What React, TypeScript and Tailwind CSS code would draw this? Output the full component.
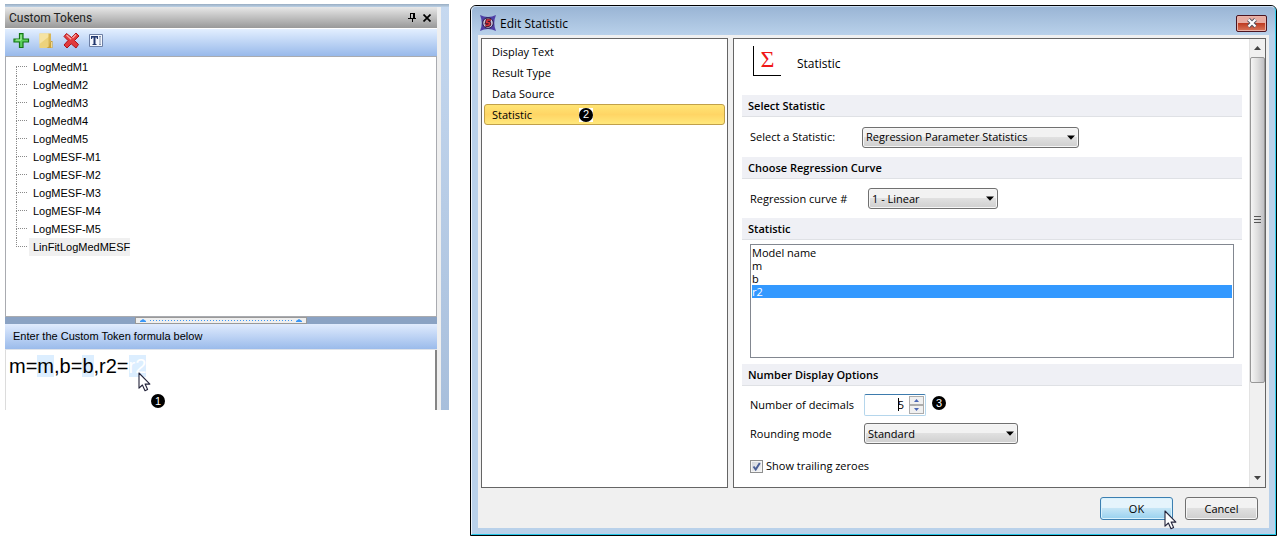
import React, { useState } from "react";

const tokens = [
  "LogMedM1",
  "LogMedM2",
  "LogMedM3",
  "LogMedM4",
  "LogMedM5",
  "LogMESF-M1",
  "LogMESF-M2",
  "LogMESF-M3",
  "LogMESF-M4",
  "LogMESF-M5",
  "LinFitLogMedMESF",
];

const pages = ["Display Text", "Result Type", "Data Source", "Statistic"];

const statistics = ["Model name", "m", "b", "r2"];

/** Black numbered callout */
const Callout: React.FC<{ n: number }> = ({ n }) => (
  <span className="flex size-[14px] shrink-0 items-center justify-center rounded-full bg-black font-['Liberation_Sans',sans-serif] text-[11px] leading-none text-white">
    {n}
  </span>
);

const Pointer: React.FC = () => (
  <svg width="13" height="20" viewBox="0 0 13 20">
    <path
      d="M1 1v15.2l3.4-3.2 2.6 5.8 2.6-1.2-2.5-5.5h4.8z"
      fill="#fff"
      stroke="#23233a"
      strokeWidth="1.1"
      strokeLinejoin="round"
    />
  </svg>
);

interface DropDownProps {
  id: string;
  options: string[];
  /** Tailwind width class */
  width: string;
}

const DropDown: React.FC<DropDownProps> = ({ id, options, width }) => (
  <div className={`relative ${width}`}>
    <select
      id={id}
      className="block h-[21px] w-full appearance-none rounded-[3px] border border-[#707070] bg-linear-to-b from-[#f2f2f2] from-45% via-[#e0e0e0] via-50% to-[#cfcfcf] pr-5 pl-[3px] text-[11px] leading-[18px] text-black inset-shadow-[0_0_0_1px_#f6f6f6]"
    >
      {options.map((option) => (
        <option key={option}>{option}</option>
      ))}
    </select>
    <svg
      className="pointer-events-none absolute top-2 right-1"
      width="8"
      height="5"
      viewBox="0 0 8 5"
    >
      <path d="M0 .5h8L4 4.7z" fill="#000" />
    </svg>
  </div>
);

const SectionTitle: React.FC<{ children: React.ReactNode }> = ({ children }) => (
  <h3 className="h-[22px] border-b border-[#dfe1e5] bg-[#eff0f5] pl-[6px] text-[11px] leading-[22px] font-semibold text-black">
    {children}
  </h3>
);

const TokenPanel: React.FC = () => {
  const [selected, setSelected] = useState("LinFitLogMedMESF");

  return (
    <section className="flex min-w-0 flex-col bg-linear-to-b from-[#c6d9f0] to-[#a8bfdc] pr-2 font-['Liberation_Sans',sans-serif] text-[11px] text-black">
      <div className="-mr-2 h-[3px] bg-linear-to-b from-[#98adc2] to-[#bdd1e6]" />
      <div className="flex flex-col bg-[#efefef] pr-1">
        {/* Title bar */}
        <header className="flex h-[21px] items-center bg-linear-to-b from-[#e8e8e8] to-[#999] pr-[6px] pl-1">
          <h2 className="flex-1 font-['Roboto',sans-serif] text-[12px] leading-5 text-[#222]">
            Custom Tokens
          </h2>
          <button type="button" aria-label="Pin" className="mr-[7px]">
            <svg width="8" height="9" viewBox="0 0 8 9" shapeRendering="crispEdges">
              <path d="M2 0h5v5h1v1H5v3H4V6H0V5h2zM3 1v4h2V1z" fill="#000" fillRule="evenodd" />
            </svg>
          </button>
          <button type="button" aria-label="Close">
            <svg width="8" height="8" viewBox="0 0 8 8">
              <path d="M.5.5l7 7M7.500.5l-7 7" stroke="#000" strokeWidth="1.7" />
            </svg>
          </button>
        </header>

        {/* Toolbar */}
        <div className="flex h-[29px] items-center gap-2 border-t border-b border-t-white border-b-[#a9abb0] bg-linear-to-b from-[#e3efff] to-[#98b9ea] pb-1 pl-2">
          <button type="button" aria-label="Add token">
            <svg width="17" height="17" viewBox="0 0 17 17">
              <path
                d="M6.500 1.500h3.500v5.500h5.500v3h-5.500v5.500H6.500V10H1V7h5.500z"
                fill="#5bd05b"
                stroke="#147514"
                strokeWidth="1.2"
              />
              <path d="M8 3v5H3" fill="none" stroke="#b5f2ae" />
            </svg>
          </button>
          <button type="button" aria-label="Open token">
            <svg width="17" height="17" viewBox="0 0 17 17">
              <path d="M1.500 1.500h9.500v14.500h-9.500z" fill="#ecd27c" />
              <path d="M1.500 1.500h9.500v3L1.500 12z" fill="#f5e3a3" />
              <path d="M10.500 1.500h2.500v7l-1 1.500v6h-1.500z" fill="#d9b654" />
              <path d="M12.500 9h2v7h-6l2.500-1.500 1-4z" fill="#caa23a" />
              <path d="M13.500 10v5.500" stroke="#f2da8e" />
            </svg>
          </button>
          <button type="button" aria-label="Delete token">
            <svg width="17" height="17" viewBox="0 0 17 17">
              <path
                d="M3.500 1.500l5 4 4.500-4.500 3 3-4.500 4.500 4 4-2.500 3.500-4.800-4.200L4 16l-3-3 4-4.500L1 4.500z"
                fill="#e13a3d"
                stroke="#b01217"
              />
              <path d="M3.500 3l4.700 4.200M13 2.500L9.500 6" stroke="#f9a5a3" strokeWidth="1.400" />
            </svg>
          </button>
          <button type="button" aria-label="Text token">
            <svg width="17" height="17" viewBox="0 0 17 17">
              <path d="M1.500 2.500h13v12h-13z" fill="#f4f7fd" stroke="#6c7fa5" />
              <path d="M3 4h7v3h-1l-.5-1.500H7.500V12h1v1h-4v-1h1V5.500h-1L4 7H3z" fill="#23396f" />
              <path d="M11 4.500h2M12 4.500v8M11 12.500h2" stroke="#8290ab" fill="none" />
            </svg>
          </button>
        </div>

        {/* Token tree */}
        <ul
          role="tree"
          aria-label="Custom tokens"
          className="min-h-[260px] border-x border-b border-[#a9abb0] bg-white pt-px pl-[10px]"
        >
          {tokens.map((token, i) => (
            <li key={token} role="treeitem" aria-selected={token === selected} className="flex h-[18px]">
              <span className="flex w-[11px] flex-col">
                <span
                  className={`h-[9px] border-b border-dotted border-[#8a8a8a] ${i > 0 ? "border-l" : ""}`}
                />
                {i < tokens.length - 1 && (
                  <span className="h-[9px] border-l border-dotted border-[#8a8a8a]" />
                )}
              </span>
              <button
                type="button"
                onClick={() => setSelected(token)}
                className={`ml-[2px] pl-1 leading-[18px] ${token === selected ? "bg-[#f0f0f0]" : ""}`}
              >
                {token}
              </button>
            </li>
          ))}
        </ul>

        {/* Splitter */}
        <div className="flex h-[7px] justify-center bg-[#8aa2c3]">
          <div className="flex w-2/5 items-center gap-1 border border-[#999] bg-[#efefef] px-1">
            <svg width="6" height="3" viewBox="0 0 6 3">
              <path d="M0 3V2l3-2 3 2v1z" fill="#3896f7" />
            </svg>
            <svg className="h-px min-w-0 flex-1">
              <line x1="0" y1="0.5" x2="100%" y2="0.5" stroke="#3896f7" strokeDasharray="1 2" />
            </svg>
            <svg width="6" height="3" viewBox="0 0 6 3">
              <path d="M0 3V2l3-2 3 2v1z" fill="#3896f7" />
            </svg>
          </div>
        </div>

        <h3
          id="formula-label"
          className="h-[26px] border-b border-[#dfe3ea] bg-linear-to-b from-[#e0ebfd] to-[#9bbbeb] pl-2 leading-6"
        >
          Enter the Custom Token formula below
        </h3>

        {/* Formula editor */}
        <div className="relative min-h-[60px] border-r-2 border-l border-r-[#858585] border-l-[#dcdcdc] bg-white pt-[5px] pl-[3px]">
          <div
            role="textbox"
            aria-labelledby="formula-label"
            contentEditable
            suppressContentEditableWarning
            className="text-[20px] leading-[23px] outline-none"
          >
            m=<span className="bg-[#dceeff]">m</span>,b=<span className="bg-[#dceeff]">b</span>,r2=
            <span className="bg-[#dceeff] text-white">r2</span>
          </div>
          <div className="pointer-events-none absolute top-[22px] left-[132px] flex items-end">
            <Pointer />
            <div className="-mb-4">
              <Callout n={1} />
            </div>
          </div>
        </div>
      </div>
    </section>
  );
};

const PageList: React.FC = () => {
  const [page, setPage] = useState("Statistic");

  return (
    <nav className="flex w-[247px] shrink-0 flex-col border border-[#656565] bg-white px-[2px] pt-[2px]">
      {pages.map((name) => (
        <button
          key={name}
          type="button"
          onClick={() => setPage(name)}
          className={`flex h-[21px] items-center rounded-[3px] border pl-[7px] text-left ${
            name === page
              ? "border-[#c1a04a] bg-linear-to-b from-[#ffe575] via-[#ffd565] to-[#ffe87c]"
              : "border-transparent"
          }`}
        >
          <span className="w-[87px]">{name}</span>
          {name === "Statistic" && (
            <span className="bg-white">
              <Callout n={2} />
            </span>
          )}
        </button>
      ))}
    </nav>
  );
};

const ScrollBar: React.FC = () => (
  <div className="flex w-4 shrink-0 flex-col items-center border-l border-[#e3e3e3] bg-[#f0f0f0]">
    <button type="button" aria-label="Scroll up" className="flex h-[18px] w-full items-center justify-center">
      <svg width="7" height="4" viewBox="0 0 7 4">
        <path d="M0 4l3.500-4L7 4z" fill="#444" />
      </svg>
    </button>
    <div className="flex w-full flex-1 flex-col">
      <div className="flex w-full flex-[79] flex-col items-center justify-center gap-[2px] rounded-xs border border-[#979797] bg-linear-to-r from-[#f5f5f5] via-[#dedede] to-[#c0c0c4]">
        <span className="h-px w-[7px] bg-[#555]" />
        <span className="h-px w-[7px] bg-[#555]" />
        <span className="h-px w-[7px] bg-[#555]" />
      </div>
      <div className="flex-[21]" />
    </div>
    <button type="button" aria-label="Scroll down" className="flex h-[18px] w-full items-center justify-center">
      <svg width="7" height="4" viewBox="0 0 7 4">
        <path d="M0 0h7L3.500 4z" fill="#444" />
      </svg>
    </button>
  </div>
);

const StatisticForm: React.FC = () => {
  const [statistic, setStatistic] = useState("r2");
  const [decimals, setDecimals] = useState(5);

  return (
    <div className="flex min-w-0 flex-1 border border-[#656565] bg-white">
      <div className="min-w-0 flex-1 pt-[7px] pr-[7px] pb-[13px] pl-2">
        <div className="mb-[19px] flex h-[30px] items-center pl-[11px]">
          <span className="flex h-[30px] w-7 justify-center border-b border-l border-black font-['Liberation_Serif',serif] text-[24px] leading-[27px] text-[#f01818]">
            Σ
          </span>
          <h2 className="ml-4 pt-[6px] text-[12px] leading-4">Statistic</h2>
        </div>

        <SectionTitle>Select Statistic</SectionTitle>
        <div className="flex h-10 items-center pl-2">
          <label htmlFor="statistic-kind" className="w-28">
            Select a Statistic:
          </label>
          <DropDown
            id="statistic-kind"
            width="w-[217px]"
            options={["Regression Parameter Statistics"]}
          />
        </div>

        <SectionTitle>Choose Regression Curve</SectionTitle>
        <div className="flex h-[39px] items-center pl-2">
          <label htmlFor="curve" className="w-[118px]">
            Regression curve #
          </label>
          <DropDown id="curve" width="w-[130px]" options={["1 - Linear"]} />
        </div>

        <SectionTitle>Statistic</SectionTitle>
        <ul
          role="listbox"
          aria-label="Statistic"
          className="mt-1 mr-2 mb-[6px] ml-2 min-h-[114px] border border-[#828790] p-px"
        >
          {statistics.map((name) => (
            <li
              key={name}
              role="option"
              aria-selected={name === statistic}
              onClick={() => setStatistic(name)}
              className={`h-[13px] leading-[13px] ${name === statistic ? "bg-[#3399ff] text-white" : ""}`}
            >
              {name}
            </li>
          ))}
        </ul>

        <SectionTitle>Number Display Options</SectionTitle>
        <div className="mt-2 flex flex-col gap-[7px] pl-2">
          <div className="flex items-center">
            <label htmlFor="decimals" className="w-[114px]">
              Number of decimals
            </label>
            <div className="relative flex h-[22px] w-[62px] items-center rounded-xs border border-[#b5d6ec] border-t-[#3d7bad] bg-white pr-px">
              <input
                id="decimals"
                type="text"
                inputMode="numeric"
                value={decimals}
                onChange={(e) => setDecimals(Number(e.target.value) || 0)}
                className="w-full min-w-0 flex-1 pr-[5px] text-right text-[11px] leading-4 outline-none"
              />
              <span className="pointer-events-none absolute top-[3px] left-[33px] h-[13px] w-px bg-black" />
              <div className="flex flex-col">
                <button
                  type="button"
                  aria-label="Increase"
                  onClick={() => setDecimals(decimals + 1)}
                  className="flex h-[9px] w-[15px] items-center justify-center border border-[#acacac] bg-[#f0f0f0]"
                >
                  <svg width="5" height="3" viewBox="0 0 5 3">
                    <path d="M0 3l2.500-3L5 3z" fill="#4a66b5" />
                  </svg>
                </button>
                <button
                  type="button"
                  aria-label="Decrease"
                  onClick={() => setDecimals(Math.max(0, decimals - 1))}
                  className="flex h-[9px] w-[15px] items-center justify-center border border-[#acacac] bg-[#f0f0f0]"
                >
                  <svg width="5" height="3" viewBox="0 0 5 3">
                    <path d="M0 0h5L2.500 3z" fill="#4a66b5" />
                  </svg>
                </button>
              </div>
            </div>
            <div className="mb-1 ml-[6px]">
              <Callout n={3} />
            </div>
          </div>

          <div className="flex items-center">
            <label htmlFor="rounding" className="w-[114px]">
              Rounding mode
            </label>
            <DropDown id="rounding" width="w-[154px]" options={["Standard"]} />
          </div>

          <label className="mt-[7px] flex items-center gap-[3px]">
            <span className="relative flex">
              <input
                type="checkbox"
                defaultChecked
                className="peer size-[13px] appearance-none border border-[#8e8f8f] bg-linear-to-br from-[#cfd3da] to-[#f6f6f6] inset-shadow-[0_0_0_1px_#f4f4f4]"
              />
              <svg
                className="pointer-events-none absolute inset-0 hidden peer-checked:block"
                width="13"
                height="13"
                viewBox="0 0 13 13"
              >
                <path d="M3.500 6.500l2.200 3L9.800 3" fill="none" stroke="#4a5f97" strokeWidth="2" />
              </svg>
            </span>
            Show trailing zeroes
          </label>
        </div>
      </div>
      <ScrollBar />
    </div>
  );
};

const EditStatisticDialog: React.FC = () => (
  <section
    role="dialog"
    aria-label="Edit Statistic"
    className="mt-px min-w-0 rounded-t-md border border-black bg-[#b9d1ea] font-['Open_Sans',sans-serif] text-[11px] leading-4 text-black"
  >
    <div className="rounded-t-[5px] border border-t-[#c9dcf0] border-r-[#35d0ee] border-b-[#23c5e6] border-l-[#edf4fb] bg-linear-to-b from-[#9ab5d5] to-[#b9d1ea] to-[28px] px-[6px] pb-[6px]">
      <header className="flex h-7 items-center">
        <svg className="mt-1 ml-[2px]" width="16" height="16" viewBox="0 0 16 16">
          <path d="M0 0q8 4 16 0-3.500 8 0 16-8-4-16 0Q3.500 8 0 0z" fill="#4f3fa6" />
          <circle cx="8" cy="8" r="5.300" fill="#c9c3dc" stroke="#281c4c" />
          <path
            d="M11 5H7.300L6.600 7.500q3.400-.3 3.100 1.400-.3 1.900-4.200 1.600"
            fill="none"
            stroke="#3a1630"
            strokeWidth="3.200"
          />
          <path
            d="M11 5H7.300L6.600 7.500q3.400-.3 3.100 1.400-.3 1.900-4.200 1.600"
            fill="none"
            stroke="#d8343a"
            strokeWidth="1.600"
          />
        </svg>
        <h1 className="mt-[6px] ml-1 flex-1 text-[12px]">Edit Statistic</h1>
        <button
          type="button"
          aria-label="Close dialog"
          className="mt-1 mr-[2px] flex h-[17px] w-[31px] items-center justify-center rounded-xs border border-[#4c1420] bg-linear-to-b from-[#e8aca2] from-45% via-[#bf3c22] via-50% to-[#d9765a] inset-shadow-[0_0_0_1px_#eab3a8]"
        >
          <svg width="12" height="10" viewBox="0 0 12 10">
            <path d="M2.500 1.500l7 7M9.500 1.500l-7 7" stroke="#53525f" strokeWidth="4" />
            <path d="M2.500 1.500l7 7M9.500 1.500l-7 7" stroke="#fff" strokeWidth="2.200" />
          </svg>
        </button>
      </header>

      <div className="bg-[#f0f0f0] px-[3px] pt-[3px]">
        <div className="flex gap-[5px]">
          <PageList />
          <StatisticForm />
        </div>
        <footer className="flex justify-end gap-3 px-2 pt-[9px] pb-2">
          <button
            type="button"
            className="relative h-[23px] w-[73px] rounded-[3px] border border-[#3c7fb1] bg-linear-to-b from-[#e5f4fc] from-45% via-[#c4e5f6] via-50% to-[#98d1ef] inset-shadow-[0_0_0_1px_#d9f2fd]"
          >
            OK
            <span className="pointer-events-none absolute top-3 left-[63px]">
              <Pointer />
            </span>
          </button>
          <button
            type="button"
            className="h-[23px] w-[73px] rounded-[3px] border border-[#707070] bg-linear-to-b from-[#f2f2f2] from-45% via-[#e0e0e0] via-50% to-[#cfcfcf] inset-shadow-[0_0_0_1px_#f6f6f6]"
          >
            Cancel
          </button>
        </footer>
      </div>
    </div>
  </section>
);

export default function App() {
  return (
    <main className="grid min-h-screen grid-cols-[444fr_807fr] items-start gap-[21px] bg-white pt-1 pr-[7px] pb-1 pl-[5px]">
      <TokenPanel />
      <EditStatisticDialog />
    </main>
  );
}
